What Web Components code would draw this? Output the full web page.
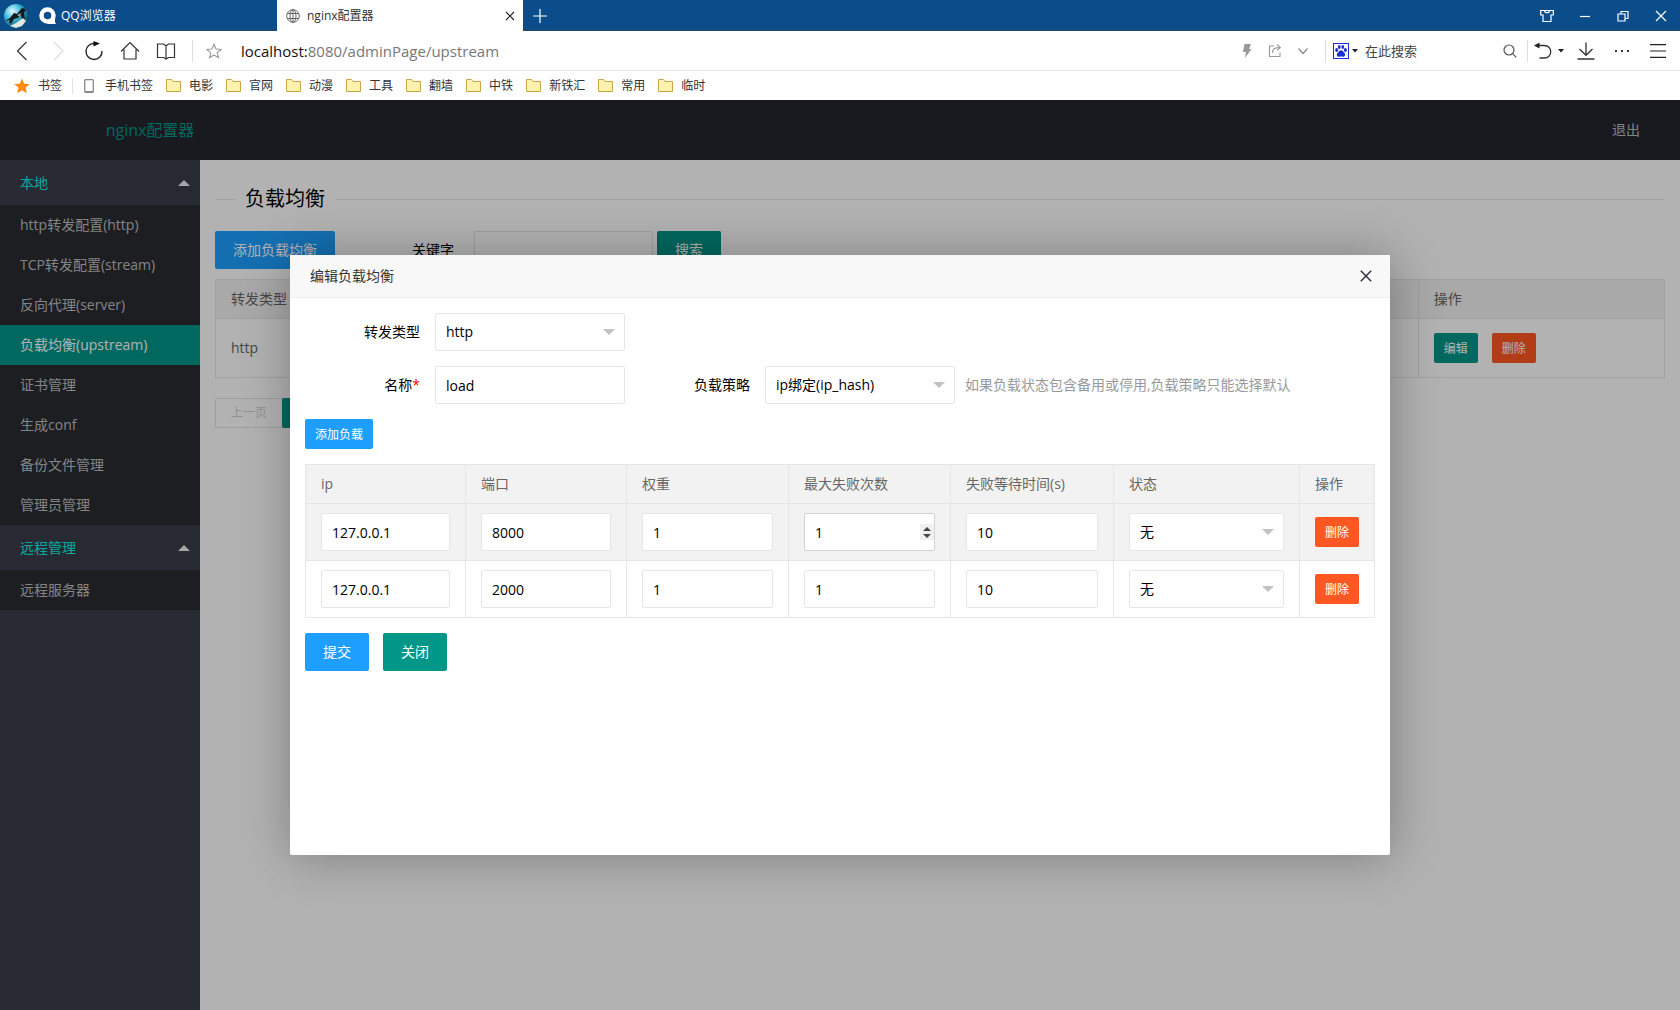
<!DOCTYPE html>
<html lang="zh-CN">
<head>
<meta charset="utf-8">
<title>nginx配置器</title>
<style>
html, body { height: 100%; }
body {
  margin: 0; overflow: hidden;
  font: 14px/24px "Open Sans", "Noto Sans CJK SC", sans-serif;
  color: #000;
}
</style>
</head>
<body>
<browser-window>
  <nginx-app></nginx-app>
</browser-window>

<script>
function define(name, html, init) {
  const tpl = document.createElement('template');
  tpl.innerHTML = html;
  customElements.define(name, class extends HTMLElement {
    constructor() {
      super();
      this.attachShadow({ mode: 'open' });
    }
    connectedCallback() {
      if (this.shadowRoot.childNodes.length) return;
      this.shadowRoot.append(tpl.content.cloneNode(true));
      if (init) init.call(this, this.shadowRoot);
    }
  });
}

/* ---------- icons ---------- */
const ICONS = {
  avatar: [24, 24, `<defs><radialGradient id="g" cx=".35" cy=".3" r=".8"><stop offset="0" stop-color="#e6fbff"/><stop offset=".45" stop-color="#35b7d8"/><stop offset="1" stop-color="#08324a"/></radialGradient></defs><circle cx="12" cy="12" r="12" fill="url(#g)"/><path d="M1 17l5-3 4-5 3 1 5-6 4 1-2 4 1 8-3-1-1-5-3 3-4 1-3 5-2-2 1-2z" fill="#15191c"/><path d="M6 22l6-3 7-5 3 3-4 5-6 2z" fill="#dfe9e2"/><path d="M13 11l4-2-1 4z" fill="#9aa7a5"/>`],
  qq: [18, 18, `<circle cx="8.500" cy="8.500" r="6" fill="none" stroke="#fff" stroke-width="4.500"/><path d="M8 13l8-2v4l1 2H9z" fill="#fff"/>`],
  globe: [14, 14, `<g fill="none" stroke="#666" stroke-width="1"><circle cx="7" cy="7" r="6.300"/><ellipse cx="7" cy="7" rx="3" ry="6.300"/><path d="M7 .7v12.600M1.200 4.500h11.600M1.200 9.500h11.600"/></g>`],
  tabclose: [10, 10, `<path d="M1 1l8 8M9 1l-8 8" stroke="#222" stroke-width="1.100" fill="none"/>`],
  plus: [14, 14, `<path d="M7 0v14M0 7h14" stroke="#fff" stroke-width="1.200"/>`],
  shirt: [14, 14, `<path d="M.7 1.500h12.600V6H11v6.500H3V6H.7zM4.500 1.500c0 3 5 3 5 0" fill="none" stroke="#fff" stroke-width="1.200"/>`],
  min: [12, 12, `<path d="M1 6.500h10" stroke="#fff" stroke-width="1.200"/>`],
  restore: [12, 12, `<path d="M1 4h7v7H1zM4 4V1.500h7V8.500H8" fill="none" stroke="#fff" stroke-width="1.200"/>`],
  close: [12, 12, `<path d="M1 1l10 10M11 1L1 11" stroke="#fff" stroke-width="1.200"/>`],
  back: [20, 20, `<path d="M14.500 1L5.500 10l9 9" fill="none" stroke="#333" stroke-width="1.200"/>`],
  fwd: [20, 20, `<path d="M6 1l9 9-9 9" fill="none" stroke="#ddd" stroke-width="1.200"/>`],
  reload: [20, 20, `<path d="M11.500 2.600A8 8 0 1 0 18 10" fill="none" stroke="#222" stroke-width="1.400"/><path d="M9.500 0l6.500 2.600-6.500 3z" fill="#111"/>`],
  home: [20, 20, `<path d="M1 10.500L10 1.500l9 9M4 8.500v9.500h12V8.500" fill="none" stroke="#333" stroke-width="1.200"/>`],
  book: [20, 20, `<path d="M1.500 3h6l2.500 2 2.500-2h6v13.500h-6L10 18l-2.500-1.500h-6zM10 5v13" fill="none" stroke="#333" stroke-width="1.200"/>`],
  star: [16, 16, `<path d="M8 1.200l2 4.800 5.200.4-4 3.300 1.300 5L8 12l-4.500 2.700 1.300-5-4-3.300L6 6z" fill="none" stroke="#999" stroke-width="1.100"/>`],
  starfill: [16, 16, `<path d="M8 .5l2.200 5.200 5.500.4-4.200 3.600 1.400 5.500L8 12.200l-4.900 3 1.400-5.500L.3 6.100l5.500-.4z" fill="#ff8a0c"/>`],
  bolt: [10, 14, `<path d="M2.500 0H9L7 5h2.500L3 14l1-6H1z" fill="#999"/>`],
  share: [14, 14, `<path d="M6 2H1.500v10.500H12V8.500M4.500 9c0-4 2-5.500 7-5.500M9 .8l3.300 2.700L9 6.200" fill="none" stroke="#999" stroke-width="1.100"/>`],
  down: [12, 12, `<path d="M1.500 3.500L6 8.500l4.500-5" fill="none" stroke="#888" stroke-width="1.200"/>`],
  paw: [16, 16, `<rect x=".5" y=".5" width="15" height="15" fill="#fff" stroke="#1a2fd6"/><g fill="#1a2fd6"><ellipse cx="3.700" cy="7" rx="1.500" ry="2"/><ellipse cx="6.300" cy="3.900" rx="1.400" ry="2"/><ellipse cx="9.800" cy="3.900" rx="1.400" ry="2"/><ellipse cx="12.400" cy="7" rx="1.500" ry="2"/><path d="M8 7.200c1.600 0 2 1.300 3.200 2.500 1.500 1.300 1.200 4-1 4-1 0-1.200-.2-2.200-.2s-1.200.2-2.200.2c-2.200 0-2.500-2.700-1-4C6 8.500 6.400 7.200 8 7.200z"/></g>`],
  caret: [6, 4, `<path d="M0 0h6L3 3.500z" fill="#222"/>`],
  search: [14, 14, `<circle cx="6" cy="6" r="5" fill="none" stroke="#555" stroke-width="1.200"/><path d="M9.600 9.600L13.300 13.300" stroke="#555" stroke-width="1.200"/>`],
  undo: [18, 18, `<path d="M3 3.500h7.500a6 6 0 0 1 0 12.500H5.500" fill="none" stroke="#333" stroke-width="1.300"/><path d="M0 3.500L5.500.5v6z" fill="#222"/>`],
  download: [18, 18, `<path d="M9 .5v12.500M2.500 7L9 13.300 15.500 7M.5 17h17" fill="none" stroke="#333" stroke-width="1.300"/>`],
  dots: [16, 4, `<g fill="#333"><rect x="1" y="1" width="2" height="2"/><rect x="7" y="1" width="2" height="2"/><rect x="13" y="1" width="2" height="2"/></g>`],
  menu: [16, 14, `<path d="M0 .7h16M0 7h16M0 13.300h16" stroke="#222" stroke-width="1.200"/>`],
  phone: [13, 14, `<rect x=".7" y=".7" width="8.600" height="12.600" rx="1" fill="#fff" stroke="#888" stroke-width="1.300"/><path d="M1 12.500h8" stroke="#888"/>`],
  folder: [15, 13, `<path d="M.5 .5h5l1.500 2h7.500v10H.5z" fill="#fff2ac" stroke="#c9a548"/>`],
  up: [12, 6, `<path d="M6 0l6 6H0z" fill="#fff" fill-opacity=".9"/>`],
  layerclose: [12, 12, `<path d="M.8.8l10.400 10.400M11.200.8L.8 11.200" stroke="#2e2d3c" stroke-width="1.400"/>`],
  spin: [14, 16, `<rect width="14" height="16" fill="#f0f0f0"/><path d="M7 3l4 4H3zM7 14l4-4H3z" fill="#444"/>`]
};
define('ui-icon', `<style>:host{display:inline-flex;flex:none}svg{display:block}</style>`, function (root) {
  const [w, h, body] = ICONS[this.getAttribute('name')];
  const box = document.createElement('div');
  box.innerHTML = `<svg width="${w}" height="${h}" viewBox="0 0 ${w} ${h}" aria-hidden="true">${body}</svg>`;
  root.append(box.firstChild);
});

/* ---------- browser chrome ---------- */
define('title-bar', `
<style>
:host { display: flex; height: 31px; background: #0b4d8a; color: #fff; font-size: 12px; box-sizing: border-box; box-shadow: inset 0 -3px 2px -1px #1d4a78; }
.brand { width: 277px; display: flex; align-items: center; gap: 4px; padding-left: 4px; box-sizing: border-box; }
.brand ui-icon:first-child { margin-right: 7px; }
.tab { width: 246px; display: flex; align-items: center; gap: 7px; padding: 0 8px 0 9px; box-sizing: border-box; background: #fff; color: #333; }
.tab span { flex: 1; }
button { border: 0; padding: 0; background: none; display: flex; align-items: center; justify-content: center; }
.add { width: 34px; }
.win { margin-left: auto; display: flex; }
.win button { width: 38px; }
</style>
<div class="brand"><ui-icon name="avatar"></ui-icon><ui-icon name="qq"></ui-icon><span>QQ浏览器</span></div>
<div class="tab"><ui-icon name="globe"></ui-icon><span>nginx配置器</span><button aria-label="关闭标签"><ui-icon name="tabclose"></ui-icon></button></div>
<button class="add" aria-label="新标签"><ui-icon name="plus"></ui-icon></button>
<div class="win">
<button aria-label="皮肤"><ui-icon name="shirt"></ui-icon></button>
<button aria-label="最小化"><ui-icon name="min"></ui-icon></button>
<button aria-label="还原"><ui-icon name="restore"></ui-icon></button>
<button aria-label="关闭"><ui-icon name="close"></ui-icon></button>
</div>`);

define('nav-bar', `
<style>
:host { display: flex; align-items: center; height: 40px; box-sizing: border-box; padding: 0 3px 0 4px; background: #fff; border-bottom: 1px solid #e4e4e4; }
button { border: 0; padding: 0; background: none; display: flex; align-items: center; justify-content: center; width: 36px; height: 38px; }
i { width: 1px; height: 22px; background: #ddd; margin: 0 3px; }
i.wide { margin: 0 3px 0 8px; }
.url { flex: 1; font-size: 15px; color: #777; padding-left: 9px; }
.url b { font-weight: 400; color: #111; }
.s { width: 28px; }
input { border: 0; outline: 0; padding: 0; margin-left: 4px; width: 131px; font: inherit; font-size: 13px; line-height: 20px; color: #333; }
input::placeholder { color: #444; opacity: 1; }
.engine { width: 32px; gap: 3px; }
.undo { gap: 6px; }
.m { width: 34px; }
.l { width: 38px; }
</style>
<button aria-label="后退"><ui-icon name="back"></ui-icon></button>
<button aria-label="前进"><ui-icon name="fwd"></ui-icon></button>
<button aria-label="刷新"><ui-icon name="reload"></ui-icon></button>
<button aria-label="主页"><ui-icon name="home"></ui-icon></button>
<button aria-label="阅读"><ui-icon name="book"></ui-icon></button>
<i class="wide"></i>
<button aria-label="收藏"><ui-icon name="star"></ui-icon></button>
<div class="url"><b>localhost:</b>8080/adminPage/upstream</div>
<button class="s" aria-label="极速"><ui-icon name="bolt"></ui-icon></button>
<button class="s" aria-label="分享"><ui-icon name="share"></ui-icon></button>
<button class="s" aria-label="更多"><ui-icon name="down"></ui-icon></button>
<i class="wide"></i>
<button class="engine" aria-label="搜索引擎"><ui-icon name="paw"></ui-icon><ui-icon name="caret"></ui-icon></button>
<input aria-label="搜索" placeholder="在此搜索">
<button class="s" aria-label="搜索"><ui-icon name="search"></ui-icon></button>
<i></i>
<button class="undo" aria-label="恢复"><ui-icon name="undo"></ui-icon><ui-icon name="caret"></ui-icon></button>
<button class="l" aria-label="下载"><ui-icon name="download"></ui-icon></button>
<button class="m" aria-label="工具"><ui-icon name="dots"></ui-icon></button>
<button class="l" aria-label="菜单"><ui-icon name="menu"></ui-icon></button>`);

define('bookmark-item', `
<style>:host{display:inline-flex}a{display:flex;align-items:center;gap:8px;color:#333;text-decoration:none;font-size:12px;line-height:20px}</style>
<a href="#"><slot></slot></a>`, function (root) {
  const icon = document.createElement('ui-icon');
  icon.setAttribute('name', this.getAttribute('icon') || 'folder');
  root.querySelector('a').prepend(icon);
});

define('bookmark-bar', `
<style>
:host { display: flex; align-items: center; gap: 13px; height: 29px; padding-left: 14px; background: #fff; }
i { width: 1px; height: 16px; background: #e2e2e2; margin: 0 -2px 0 -3px; }
</style>
<bookmark-item icon="starfill">书签</bookmark-item><i></i>
<bookmark-item icon="phone">手机书签</bookmark-item>
<bookmark-item>电影</bookmark-item><bookmark-item>官网</bookmark-item><bookmark-item>动漫</bookmark-item>
<bookmark-item>工具</bookmark-item><bookmark-item>翻墙</bookmark-item><bookmark-item>中铁</bookmark-item>
<bookmark-item>新铁汇</bookmark-item><bookmark-item>常用</bookmark-item><bookmark-item>临时</bookmark-item>`);

define('browser-window', `
<style>
:host { display: flex; flex-direction: column; height: 100vh; }
title-bar, nav-bar, bookmark-bar { flex: none; }
main { flex: 1; min-height: 0; display: flex; }
::slotted(*) { flex: 1; min-width: 0; }
</style>
<title-bar></title-bar><nav-bar></nav-bar><bookmark-bar></bookmark-bar>
<main><slot></slot></main>`);

/* ---------- form controls ---------- */
define('lay-button', `
<style>
:host { display: flex; flex: none; }
button { height: 38px; padding: 0 18px; border: 0; border-radius: 2px; background: #009688; color: #fff; font: inherit; font-size: 14px; white-space: nowrap; }
:host([small]) button { height: 30px; padding: 2px 10px 0; font-size: 12px; }
:host([kind=blue]) button { background: #1e9fff; }
:host([kind=red]) button { background: #ff5722; }
</style>
<button type="button"><slot></slot></button>`);

const CONTROL = `
.box { position: relative; display: block; }
input, select { display: block; width: 100%; height: 38px; box-sizing: border-box; margin: 0; padding: 0 10px; border: 1px solid #e6e6e6; border-radius: 2px; background: #fff; color: #000; font: inherit; line-height: 20px; outline: 0; appearance: none; }
input[type=number] { appearance: textfield; }
input::-webkit-inner-spin-button { appearance: none; }
select { padding-right: 30px; background: #fff url('data:image/svg+xml,<svg xmlns="http://www.w3.org/2000/svg" width="12" height="6"><path d="M0 0h12L6 6z" fill="%23c2c2c2"/></svg>') no-repeat right 9px center; }
:host([active]) input { border-color: #d2d2d2; }
.box ui-icon { position: absolute; right: 1px; top: 11px; }`;

function control(el, id) {
  const label = el.getAttribute('label'), value = el.getAttribute('value') || '';
  const type = el.getAttribute('type') || 'text';
  if (type === 'select') return `<select id="${id}" aria-label="${label}"><option>${value}</option></select>`;
  return `<input id="${id}" type="${type}" aria-label="${label}" value="${value}">` + (el.hasAttribute('active') ? '<ui-icon name="spin"></ui-icon>' : '');
}
define('lay-input', `<style>:host{display:block}${CONTROL}</style><span class="box"></span>`, function (root) {
  root.querySelector('.box').innerHTML = control(this, 'c');
});
define('lay-field', `
<style>:host { display: flex; align-items: center; --label: 130px; --field: 190px; --pad: 15px; }
label { width: var(--label); padding-right: var(--pad); box-sizing: border-box; text-align: right; line-height: 20px; }
label span { color: red; }
.box { width: var(--field); }${CONTROL}</style>
<label for="c"></label><span class="box"></span>`, function (root) {
  root.querySelector('label').innerHTML = this.getAttribute('label') + (this.hasAttribute('required') ? '<span>*</span>' : '');
  root.querySelector('.box').innerHTML = control(this, 'c').replace(/ aria-label="[^"]*"/, '');
});

const TABLE = `
table { width: 100%; table-layout: fixed; border-collapse: collapse; color: #666; background: #fff; }
th, td { border: 1px solid #e6e6e6; padding: 9px 15px; text-align: left; font-weight: 400; line-height: 20px; }
thead tr, tr.hover { background: #f2f2f2; }`;

/* ---------- application ---------- */
define('app-header', `
<style>
:host { display: flex; align-items: center; justify-content: space-between; height: 60px; background: #23262e; }
.logo { width: 300px; text-align: center; font-size: 16px; color: #009688; }
a { color: rgba(255,255,255,.7); text-decoration: none; padding-right: 40px; }
</style>
<div class="logo">nginx配置器</div><a href="#">退出</a>`);

define('side-group', `
<style>
:host { display: block; }
button { display: flex; width: 100%; height: 45px; align-items: center; justify-content: space-between; border: 0; padding: 0 10px 0 20px; background: none; color: #0cf0e2; font: inherit; }
nav { background: #2a2b32; }
</style>
<button type="button"><span></span><ui-icon name="up"></ui-icon></button>
<nav><slot></slot></nav>`, function (root) {
  root.querySelector('span').textContent = this.getAttribute('label');
});
define('side-link', `
<style>
:host { display: block; }
a { display: block; padding: 0 20px; line-height: 40px; height: 40px; color: rgba(255,255,255,.7); text-decoration: none; white-space: nowrap; }
:host([current]) a { background: #009688; color: #fff; }
</style>
<a href="#"><slot></slot></a>`);
define('side-bar', `
<style>:host { display: block; flex: none; width: 200px; background: #393d49; }</style>
<side-group label="本地">
<side-link>http转发配置(http)</side-link><side-link>TCP转发配置(stream)</side-link>
<side-link>反向代理(server)</side-link><side-link current>负载均衡(upstream)</side-link>
<side-link>证书管理</side-link><side-link>生成conf</side-link>
<side-link>备份文件管理</side-link><side-link>管理员管理</side-link>
</side-group>
<side-group label="远程管理"><side-link>远程服务器</side-link></side-group>`);

define('upstream-page', `
<style>
:host { display: block; flex: 1; min-width: 0; background: #fff; padding: 24px 15px 0; }
h1 { display: flex; align-items: center; gap: 10px; margin: 0 0 17px; font-size: 20px; font-weight: 400; line-height: 30px; }
h1::before, h1::after { content: ""; height: 1px; background: #e6e6e6; width: 20px; }
h1::after { flex: 1; }
.tools { display: flex; gap: 4px; margin-bottom: 10px; }
.tools lay-field { --label: 135px; --field: 179px; --pad: 20px; }
${TABLE}
tbody td { padding: 14px 15px; }
.ops { display: flex; gap: 14px; }
.pager { display: flex; margin-top: 20px; font-size: 12px; line-height: 28px; }
.pager a { border: 1px solid #e2e2e2; padding: 0 15px; color: #d2d2d2; text-decoration: none; border-radius: 2px 0 0 2px; }
.pager b { width: 36px; margin-left: -1px; background: #009688; border-radius: 2px; }
</style>
<h1>负载均衡</h1>
<div class="tools"><lay-button kind="blue">添加负载均衡</lay-button><lay-field label="关键字"></lay-field><lay-button>搜索</lay-button></div>
<table><colgroup><col style="width:16%"><col><col style="width:17%"></colgroup>
<thead><tr><th>转发类型</th><th></th><th>操作</th></tr></thead>
<tbody><tr><td>http</td><td></td><td><div class="ops"><lay-button small>编辑</lay-button><lay-button small kind="red">删除</lay-button></div></td></tr></tbody></table>
<div class="pager"><a href="#">上一页</a><b></b></div>`);

const COLS = [['ip', 160], ['端口', 161], ['权重', 162], ['最大失败次数', 162], ['失败等待时间(s)', 163], ['状态', 186], ['操作', 75]];
const ROWS = [['127.0.0.1', '8000', '1', '1', '10', '无'], ['127.0.0.1', '2000', '1', '1', '10', '无']];
define('server-table', `
<style>:host { display: block; }${TABLE}</style>
<table>
<colgroup>${COLS.map(c => `<col style="width:${c[1]}px">`).join('')}</colgroup>
<thead><tr>${COLS.map(c => `<th>${c[0]}</th>`).join('')}</tr></thead>
<tbody>${ROWS.map((r, y) => `<tr class="${y ? '' : 'hover'}">${r.map((v, x) =>
  `<td><lay-input label="${COLS[x][0]}" value="${v}" type="${x === 5 ? 'select' : x ? 'number' : 'text'}"${!y && x === 3 ? ' active' : ''}></lay-input></td>`).join('')}<td><lay-button small kind="red">删除</lay-button></td></tr>`).join('')}</tbody>
</table>`);

define('layer-dialog', `
<style>
:host { display: flex; flex-direction: column; width: 1100px; max-width: 90%; height: 600px; max-height: 90%; background: #fff; border-radius: 2px; box-shadow: 1px 1px 50px rgba(0,0,0,.3); }
header { display: flex; align-items: center; justify-content: space-between; height: 42px; padding: 0 18px 0 20px; background: #f8f8f8; border-bottom: 1px solid #eee; color: #333; }
header button { border: 0; padding: 0; background: none; display: flex; }
section { flex: 1; padding: 15px; }
</style>
<header><span></span><button aria-label="关闭"><ui-icon name="layerclose"></ui-icon></button></header>
<section><slot></slot></section>`, function (root) {
  root.querySelector('span').textContent = this.getAttribute('heading');
});

define('upstream-form', `
<style>
:host { display: flex; flex-direction: column; gap: 15px; align-items: stretch; }
.row { display: flex; align-items: center; gap: 10px; }
.acts { display: flex; gap: 14px; }
.hint { color: #999; line-height: 20px; }
</style>
<div class="row"><lay-field label="转发类型" type="select" value="http"></lay-field></div>
<div class="row"><lay-field label="名称" required value="load"></lay-field><lay-field label="负载策略" type="select" value="ip绑定(ip_hash)"></lay-field><span class="hint">如果负载状态包含备用或停用,负载策略只能选择默认</span></div>
<div class="acts"><lay-button small kind="blue">添加负载</lay-button></div>
<server-table></server-table>
<div class="acts"><lay-button kind="blue">提交</lay-button><lay-button>关闭</lay-button></div>`);

define('nginx-app', `
<style>
:host { position: relative; display: flex; flex-direction: column; }
.body { flex: 1; min-height: 0; display: flex; }
.shade { position: absolute; inset: 0; background: rgba(0,0,0,.3); display: flex; align-items: center; justify-content: center; overflow: hidden; }
</style>
<app-header></app-header>
<div class="body"><side-bar></side-bar><upstream-page></upstream-page></div>
<div class="shade"><layer-dialog heading="编辑负载均衡"><upstream-form></upstream-form></layer-dialog></div>`);
</script>
</body>
</html>
